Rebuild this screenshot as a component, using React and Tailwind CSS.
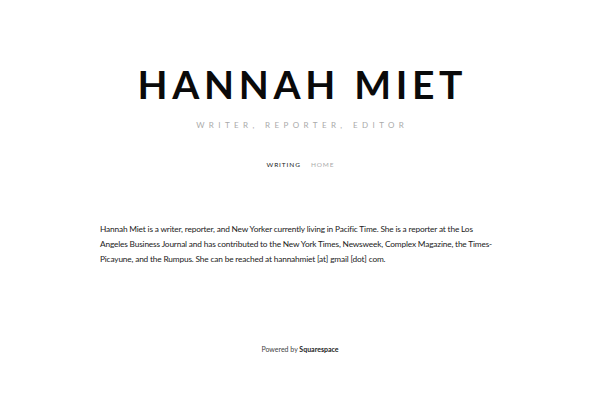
export default function App() {
  return (
    <div className="w-[600px] h-[400px] bg-white flex flex-col items-center" style={{ fontFamily: "Lato, 'Noto Sans', sans-serif" }}>
      <h1 className="mt-[62px] text-[39px] leading-[44px] font-bold tracking-[0.12em] text-[#0a0a0a] pl-[0.12em]">HANNAH MIET</h1>
      <div className="mt-[14px] text-[8px] leading-[10px] tracking-[0.55em] text-[#aaa] pl-[0.55em]">WRITER, REPORTER, EDITOR</div>
      <nav className="mt-[30px] flex gap-[10px] text-[6.5px] leading-[10px] tracking-[0.14em] pl-[1px]">
        <span className="text-[#222]">WRITING</span>
        <span className="text-[#aaa]">HOME</span>
      </nav>
      <p className="mt-[52px] w-[400px] text-[8.3px] leading-[14.8px] tracking-[-0.02em] text-[#222]">
        Hannah Miet is a writer, reporter, and New Yorker currently living in Pacific Time. She is a reporter at the Los Angeles Business Journal and has contributed to the New York Times, Newsweek, Complex Magazine, the Times-Picayune, and the Rumpus. She can be reached at hannahmiet [at] gmail [dot] com.
      </p>
      <div className="mt-[78px] text-[7px] leading-[10px] text-[#444]">
        Powered by <span className="text-[#222] font-bold">Squarespace</span>
      </div>
    </div>
  );
}
